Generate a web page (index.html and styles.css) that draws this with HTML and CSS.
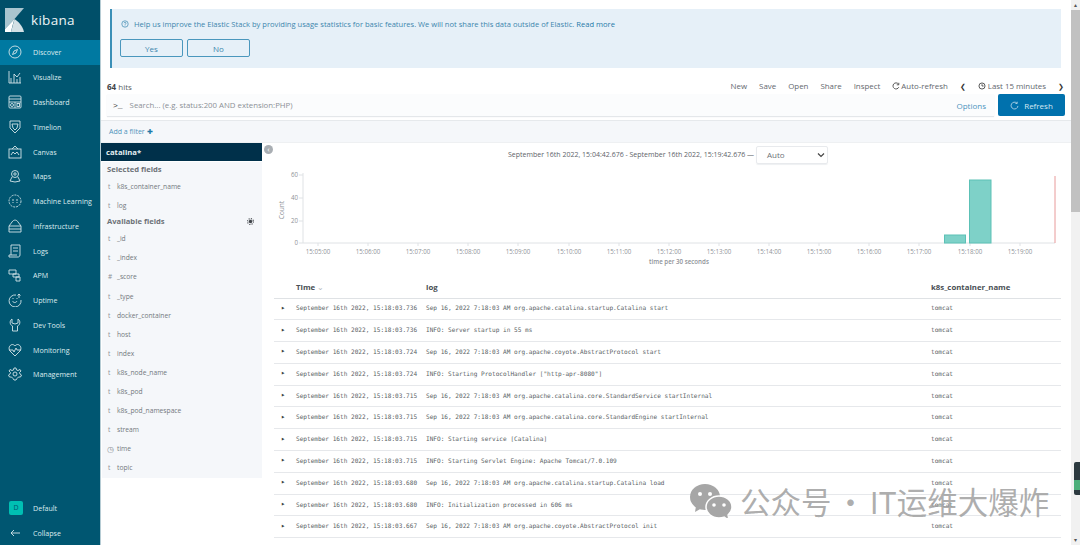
FILE: index.html
```html
<!DOCTYPE html>
<html lang="en">
<head>
<meta charset="utf-8">
<title>Kibana Discover</title>
<link rel="stylesheet" href="styles.css">
</head>
<body>
<div class="app">
<nav class="side">
  <div class="brand">
    <svg class="logo" viewBox="0 0 19 24"><path fill="#a9c5cf" d="M0 0H19L9.500 11 0 21Z"/><path fill="#d3e0e5" d="M9.500 11C14 14 17.500 18 19 24H6Z"/><path fill="#fff" d="M0 24V21L9.500 11C8 15 7 20 6 24Z"/></svg>
    <span class="brand-name">kibana</span>
  </div>
  <ul class="nav">
    <li class="nav-item active"><svg class="ic" viewBox="0 0 14 14"><circle cx="7" cy="7" r="6"/><path d="M9.500 4.500 8 8 4.500 9.500 6 6Z"/></svg>Discover</li>
    <li class="nav-item"><svg class="ic" viewBox="0 0 14 14"><path d="M1 1V13H13M3 13V8M6 13V4L9 7 12 3M9 13V9M12 13V7"/></svg>Visualize</li>
    <li class="nav-item"><svg class="ic" viewBox="0 0 14 14"><rect x="1" y="1" width="12" height="12" rx="1"/><path d="M1 4H13M1 7H13M7 7V13"/><circle cx="4" cy="10" r="1.500"/><rect x="9" y="8.500" width="2.500" height="3"/></svg>Dashboard</li>
    <li class="nav-item"><svg class="ic" viewBox="0 0 14 14"><path d="M2 1H12V8L7 13 2 8ZM4 4H10L9 8 7 10 5 8Z"/></svg>Timelion</li>
    <li class="nav-item"><svg class="ic" viewBox="0 0 14 14"><rect x="1" y="4" width="12" height="9"/><path d="M4 4 7 1 10 4M3 10 5 7 7 9 9 7 11 10"/></svg>Canvas</li>
    <li class="nav-item"><svg class="ic" viewBox="0 0 14 14"><circle cx="7" cy="5" r="3.500"/><circle cx="7" cy="5" r="1.200"/><path d="M4 8 2 12 7 13 12 12 10 8"/></svg>Maps</li>
    <li class="nav-item"><svg class="ic dash" viewBox="0 0 14 14"><circle cx="7" cy="7" r="6"/><path d="M5 5V9M9 5V9"/></svg>Machine Learning</li>
    <li class="nav-item"><svg class="ic" viewBox="0 0 14 14"><path d="M1 7 4 3C6 0 9 1 10 3L13 7M1 7H13V13H1ZM1 10H13"/></svg>Infrastructure</li>
    <li class="nav-item"><svg class="ic" viewBox="0 0 14 14"><path d="M3 1H12V11C12 13 10 13 10 13H1V11H9M3 1V11M5 4H10M5 7H10"/></svg>Logs</li>
    <li class="nav-item"><svg class="ic" viewBox="0 0 14 14"><path d="M1 2H8V6H1ZM5 6H11V9H5ZM8 9H12V13H8Z"/></svg>APM</li>
    <li class="nav-item"><svg class="ic" viewBox="0 0 14 14"><path d="M8 2A6 6 0 1 0 13 7M4.500 8C5.500 10 8 10 9 8M5 5V6M9 5V6M11 5V1M9.500 2.500 11 1 12.500 2.500"/></svg>Uptime</li>
    <li class="nav-item"><svg class="ic" viewBox="0 0 14 14"><path d="M4 1V5L7 6 10 5V1C13 3 12 7 9.500 8V13H4.500V8C2 7 1 3 4 1Z"/></svg>Dev Tools</li>
    <li class="nav-item"><svg class="ic" viewBox="0 0 14 14"><path d="M7 13 2 8C-1 4 4-1 7 3 10-1 15 4 12 8ZM1 7H5L6 9 8 5 9 7H13"/></svg>Monitoring</li>
    <li class="nav-item"><svg class="ic" viewBox="0 0 14 14"><circle cx="7" cy="7" r="2"/><path d="M6 1H8L8.500 3 10 3.500 12 2.500 13 4 11.500 5.500 12 7 13.500 8 12.500 10 10.500 10 9 11.500 8 13H6L5 11.500 3.500 10 1.500 10 .5 8 2 7 2.500 5.500 1 4 2 2.500 4 3.500 5.500 3Z"/></svg>Management</li>
  </ul>
  <ul class="nav nav-bottom">
    <li class="nav-item"><span class="space">D</span>Default</li>
    <li class="nav-item"><svg class="ic" viewBox="0 0 14 14"><path d="M12 7H3M6 4 3 7 6 10"/></svg>Collapse</li>
  </ul>
</nav>
<main class="main">
  <section class="banner">
    <p class="banner-text"><svg class="help" viewBox="0 0 10 10"><circle cx="5" cy="5" r="4"/><path d="M3.800 4C3.800 2.500 6.300 2.500 6.300 4 6.300 5 5 5 5 6M5 7V7.800"/></svg>Help us improve the Elastic Stack by providing usage statistics for basic features. We will not share this data outside of Elastic. <span class="read">Read more</span></p>
    <div class="banner-btns"><button class="ghost">Yes</button><button class="ghost">No</button></div>
  </section>
  <div class="topbar">
    <span class="hits"><b>64</b> hits</span>
    <div class="menu">
      <span>New</span><span>Save</span><span>Open</span><span>Share</span><span>Inspect</span>
      <span class="auto"><svg class="mini" viewBox="0 0 10 10"><path d="M8 2.500A3.800 3.800 0 1 0 8.500 6.500M8.500 1V3.500H6"/></svg>Auto-refresh</span>
      <span class="chev">❮</span>
      <span class="last"><svg class="mini" viewBox="0 0 10 10"><circle cx="5" cy="5" r="3.800"/><path d="M5 2.800V5H7"/></svg>Last 15 minutes</span>
      <span class="chev">❯</span>
    </div>
  </div>
  <div class="search-row">
    <div class="search">
      <span class="prompt">&gt;_</span>
      <span class="placeholder">Search... (e.g. status:200 AND extension:PHP)</span>
      <span class="options">Options</span>
    </div>
    <button class="refresh"><svg class="mini" viewBox="0 0 10 10"><path d="M7.500 2.200A3.800 3.800 0 1 0 8.800 5.500M8 .8V2.800H6"/></svg>Refresh</button>
  </div>
  <div class="filter-bar"><span class="add">Add a filter</span><span class="plus">✚</span></div>
  <div class="content">
    <aside class="fields">
      <div class="index">catalina*</div>
      <div class="field-list">
        <h3 class="group first">Selected fields</h3>
        <div class="field"><i>t</i>k8s_container_name</div>
        <div class="field"><i>t</i>log</div>
        <h3 class="group avail">Available fields<svg class="gear" viewBox="0 0 10 10"><circle class="gear-teeth" cx="5" cy="5" r="4.200"/><circle cx="5" cy="5" r="2.500"/></svg></h3>
        <div class="field"><i>t</i>_id</div>
        <div class="field"><i>t</i>_index</div>
        <div class="field"><i>#</i>_score</div>
        <div class="field"><i>t</i>_type</div>
        <div class="field"><i>t</i>docker_container</div>
        <div class="field"><i>t</i>host</div>
        <div class="field"><i>t</i>index</div>
        <div class="field"><i>t</i>k8s_node_name</div>
        <div class="field"><i>t</i>k8s_pod</div>
        <div class="field"><i>t</i>k8s_pod_namespace</div>
        <div class="field"><i>t</i>stream</div>
        <div class="field"><i class="clock">◷</i>time</div>
        <div class="field"><i>t</i>topic</div>
      </div>
    </aside>
    <section class="results">
      <span class="collapse-btn">‹</span>
      <div class="range">
        <span>September 16th 2022, 15:04:42.676 - September 16th 2022, 15:19:42.676 —</span>
        <span class="select">Auto<svg class="caret" viewBox="0 0 8 6"><path d="M1 1.500 4 4.500 7 1.500"/></svg></span>
      </div>
      <svg class="chart" viewBox="0 0 797 108" width="797" height="108">
        <g class="axis-lines">
          <path d="M29 6V76H781M29 8H25M29 31H25M29 54H25M29 76H25"/>
          <path d="M44 76V79M94 76V79M144 76V79M194 76V79M244 76V79M295 76V79M345 76V79M395 76V79M445 76V79M495 76V79M545 76V79M595 76V79M645 76V79M696 76V79M746 76V79"/>
        </g>
        <g class="ylab">
          <text x="24" y="10">60</text><text x="24" y="33">40</text><text x="24" y="56">20</text><text x="24" y="78">0</text>
        </g>
        <text class="count" transform="translate(10 43) rotate(-90)">Count</text>
        <g class="xlab">
          <text x="44" y="86.500">15:05:00</text><text x="94" y="86.500">15:06:00</text><text x="144" y="86.500">15:07:00</text><text x="194" y="86.500">15:08:00</text><text x="244" y="86.500">15:09:00</text><text x="295" y="86.500">15:10:00</text><text x="345" y="86.500">15:11:00</text><text x="395" y="86.500">15:12:00</text><text x="445" y="86.500">15:13:00</text><text x="495" y="86.500">15:14:00</text><text x="545" y="86.500">15:15:00</text><text x="595" y="86.500">15:16:00</text><text x="645" y="86.500">15:17:00</text><text x="696" y="86.500">15:18:00</text><text x="746" y="86.500">15:19:00</text>
        </g>
        <text class="xtitle" x="405" y="97">time per 30 seconds</text>
        <rect class="bar" x="670.500" y="68" width="21" height="8"/>
        <rect class="bar" x="695.500" y="13" width="21.500" height="63"/>
        <path class="now" d="M781 9V76"/>
      </svg>
      <table class="docs">
        <thead>
          <tr><th class="arrow-col"></th><th class="time-col">Time <span class="sort">⌄</span></th><th class="log-col">log</th><th>k8s_container_name</th></tr>
        </thead>
        <tbody>
          <tr><td class="tri">▸</td><td>September 16th 2022, 15:18:03.736</td><td>Sep 16, 2022 7:18:03 AM org.apache.catalina.startup.Catalina start</td><td>tomcat</td></tr>
          <tr><td class="tri">▸</td><td>September 16th 2022, 15:18:03.736</td><td>INFO: Server startup in 55 ms</td><td>tomcat</td></tr>
          <tr><td class="tri">▸</td><td>September 16th 2022, 15:18:03.724</td><td>Sep 16, 2022 7:18:03 AM org.apache.coyote.AbstractProtocol start</td><td>tomcat</td></tr>
          <tr><td class="tri">▸</td><td>September 16th 2022, 15:18:03.724</td><td>INFO: Starting ProtocolHandler ["http-apr-8080"]</td><td>tomcat</td></tr>
          <tr><td class="tri">▸</td><td>September 16th 2022, 15:18:03.715</td><td>Sep 16, 2022 7:18:03 AM org.apache.catalina.core.StandardService startInternal</td><td>tomcat</td></tr>
          <tr><td class="tri">▸</td><td>September 16th 2022, 15:18:03.715</td><td>Sep 16, 2022 7:18:03 AM org.apache.catalina.core.StandardEngine startInternal</td><td>tomcat</td></tr>
          <tr><td class="tri">▸</td><td>September 16th 2022, 15:18:03.715</td><td>INFO: Starting service [Catalina]</td><td>tomcat</td></tr>
          <tr><td class="tri">▸</td><td>September 16th 2022, 15:18:03.715</td><td>INFO: Starting Servlet Engine: Apache Tomcat/7.0.109</td><td>tomcat</td></tr>
          <tr><td class="tri">▸</td><td>September 16th 2022, 15:18:03.680</td><td>Sep 16, 2022 7:18:03 AM org.apache.catalina.startup.Catalina load</td><td>tomcat</td></tr>
          <tr><td class="tri">▸</td><td>September 16th 2022, 15:18:03.680</td><td>INFO: Initialization processed in 606 ms</td><td>tomcat</td></tr>
          <tr><td class="tri">▸</td><td>September 16th 2022, 15:18:03.667</td><td>Sep 16, 2022 7:18:03 AM org.apache.coyote.AbstractProtocol init</td><td>tomcat</td></tr>
        </tbody>
      </table>
    </section>
  </div>
</main>
<div class="scrollbar">
  <span class="sb-arrow">▴</span>
  <div class="thumb"></div>
  <div class="sb-spacer"></div>
  <span class="sb-arrow">▾</span>
</div>
</div>
<div class="sb-widget"></div>
<div class="watermark">
  <svg class="wechat" viewBox="0 0 42 34"><ellipse cx="15" cy="13" rx="15" ry="13" fill="#a6a6a6"/><path d="M6 22 5 28 12 24Z" fill="#a6a6a6"/><ellipse cx="29" cy="23" rx="13" ry="11" fill="#a6a6a6" stroke="#fff" stroke-width="1.500"/><path d="M34 32 38 35 37 29Z" fill="#a6a6a6"/><circle cx="10" cy="10" r="2" fill="#fff"/><circle cx="20" cy="10" r="2" fill="#fff"/><circle cx="24" cy="21" r="1.800" fill="#fff"/><circle cx="34" cy="21" r="1.800" fill="#fff"/></svg>
  <span>公众号 · IT运维大爆炸</span>
</div>
</body>
</html>
```

FILE: styles.css
```css
* { box-sizing: border-box; }
html, body { margin: 0; height: 100%; overflow: hidden; background: #fff; }
body { font-family: "Open Sans", "Liberation Sans", sans-serif; color: #5a5f66; font-size: 8px; }
ul { list-style: none; margin: 0; padding: 0; }
p, h3 { margin: 0; }
.app { display: flex; height: 545px; }

.side { width: 101px; flex: none; background: #005671; color: #fff; display: flex; flex-direction: column; border-right: 1px solid #b6ccd4; }
.brand { height: 40px; background: #004f69; display: flex; align-items: center; padding-left: 5px; gap: 7px; flex: none; }
.logo { width: 19px; height: 24px; }
.brand-name { font-size: 13.500px; letter-spacing: .3px; color: #eef5f7; }
.nav-item { height: 24.750px; display: flex; align-items: center; padding-left: 8px; gap: 11px; font-size: 7.100px; color: #dcebef; }
.nav-item.active { background: #0079a1; height: 25px; padding-bottom: 1px; }
.ic { width: 14px; height: 14px; flex: none; fill: none; stroke: #d4e4e9; stroke-width: .9; }
.ic.dash { stroke-dasharray: 2 1; }
.nav-bottom { margin-top: auto; }
.space { width: 14px; height: 14px; flex: none; background: #00bfb3; color: #005671; border-radius: 2px; display: flex; align-items: center; justify-content: center; font-size: 7px; margin-left: 1px; margin-right: -1px; }

.main { flex: 1; min-width: 0; display: flex; flex-direction: column; }
.banner { margin: 9px 10px 0 9px; height: 59px; background: #e6f0f8; border-left: 2px solid #3a8fb7; padding: 10px 9px 0 9px; flex: none; }
.banner-text { color: #3d86ad; font-size: 7.570px; line-height: 10px; display: flex; align-items: center; white-space: pre-wrap; }
.read { color: #1f7aa8; }
.help { width: 8px; height: 8px; margin-right: 5px; fill: none; stroke: #2a80aa; stroke-width: .8; }
.banner-btns { display: flex; gap: 4px; margin-top: 10px; margin-left: -1px; }
.ghost { width: 63px; height: 18px; border: 1px solid #4a97bd; border-radius: 2px; background: #e6f0f8; color: #3d86ad; font: 8px "Open Sans", sans-serif; padding: 0; }

.topbar { display: flex; justify-content: space-between; align-items: center; height: 26px; padding: 10px 7px 0 6px; flex: none; }
.hits { font-size: 8px; color: #5a5f66; }
.hits b { color: #3f4348; }
.menu { display: flex; align-items: center; gap: 12px; font-size: 7.900px; color: #63686e; }
.mini { width: 8px; height: 8px; fill: none; stroke: #444; stroke-width: 1.100; }
.auto, .last { display: inline-flex; align-items: center; gap: 1px; }
.last { gap: 2px; }
.chev { font-size: 7px; color: #333; }

.search-row { display: flex; height: 26px; padding: 0 6px 4px 6px; flex: none; gap: 4px; }
.search { flex: 1; height: 22px; background: #fbfcfd; box-shadow: 0 1px 1px #e4e7ea; display: flex; align-items: center; padding: 0 8px 0 6px; color: #8b9096; font-size: 7.800px; }
.prompt { color: #444; margin-right: 7px; font-size: 8px; font-family: "Liberation Mono", monospace; }
.options { margin-left: auto; color: #4d95bd; font-size: 8px; }
.refresh { width: 67px; height: 22px; background: #0071ad; border: 0; border-radius: 2px; color: #d5e8f3; font: 8px "Open Sans", sans-serif; display: flex; align-items: center; justify-content: center; gap: 5px; padding: 0; }
.refresh .mini { stroke: #d5e8f3; width: 9px; height: 9px; stroke-width: .8; }

.filter-bar { height: 22px; background: #f5f7fa; border-top: 1px solid #e6e9ec; display: flex; align-items: center; padding: 0 0 1px 8px; gap: 2px; color: #4f93bb; font-size: 7px; flex: none; }
.plus { font-size: 6.500px; color: #1f7aa8; }

.content { flex: 1; display: flex; min-height: 0; border-top: 1px solid #eef0f2; }
.fields { width: 161px; flex: none; }
.index { height: 18px; background: #00304a; color: #e4edf1; font-weight: 700; font-size: 7.700px; display: flex; align-items: center; padding: 0 0 1px 5px; }
.field-list { background: #f5f7fa; margin-left: 1px; height: 316px; padding-left: 5px; }
.group { font-size: 7.600px; font-weight: 700; color: #6d7278; height: 15px; line-height: 15px; display: flex; justify-content: space-between; align-items: center; padding-right: 8px; }
.group.first { margin-top: 1px; }
.group.avail { margin-top: -1px; }
.field { height: 19.100px; display: flex; align-items: center; font-size: 6.700px; color: #72777d; }
.field i { font-style: normal; width: 10px; flex: none; font-size: 6.500px; color: #8a8f95; padding-left: 1px; }
.field .clock { font-size: 8px; padding-left: 0; }
.gear { width: 7px; height: 7px; fill: #3f4348; stroke: none; }
.gear-teeth { fill: none; stroke: #3f4348; stroke-width: 1.600; stroke-dasharray: 1.600 1.700; }

.results { flex: 1; position: relative; padding-left: 12px; min-width: 0; }
.collapse-btn { position: absolute; left: 2px; top: 2px; width: 9px; height: 9px; border-radius: 50%; background: #a9aeb3; color: #fff; font-size: 8px; line-height: 7px; text-align: center; }
.range { height: 21px; display: flex; align-items: center; padding-left: 234px; gap: 2px; font-size: 7px; color: #5e6369; white-space: nowrap; margin: 1px 0 2px; }
.select { width: 72px; height: 18px; border: 1px solid #e8eaed; border-radius: 2px; display: flex; align-items: center; justify-content: space-between; padding: 0 2px 0 10px; font-size: 8px; color: #6d7278; box-shadow: 0 1px 1px #eef0f2; }
.caret { width: 8px; height: 6px; fill: none; stroke: #444; stroke-width: 1.200; }
.chart { display: block; overflow: visible; }
.axis-lines path { fill: none; stroke: #dfe2e5; stroke-width: 1; }
.ylab text { font-size: 6.200px; fill: #8f9398; text-anchor: end; }
.xlab text { font-size: 6.200px; fill: #8f9398; text-anchor: middle; }
.count { font-size: 6.500px; fill: #8f9398; text-anchor: middle; }
.xtitle { font-size: 6.200px; fill: #8f9398; text-anchor: middle; font-weight: 600; }
.bar { fill: #7ed1c8; stroke: #5cc1b6; stroke-width: 1; }
.now { stroke: #e89a9a; stroke-width: 1; fill: none; }

.docs { border-collapse: collapse; width: 787px; table-layout: fixed; margin-top: 1px; }
.docs th { text-align: left; font-size: 7.800px; font-weight: 700; color: #4a4f55; height: 22px; border-bottom: 1px solid #dfe2e5; padding: 1px 0 0; }
.docs td { font: 6.100px "DejaVu Sans Mono", monospace; color: #5a5f66; height: 21.800px; border-bottom: 1px solid #e6e8eb; padding: 0 0 2px; white-space: nowrap; }
.arrow-col { width: 22px; }
.time-col { width: 130px; }
.log-col { width: 505px; }
.docs .tri { font-size: 7px; color: #3f4348; padding-left: 7px; }
.sort { color: #b5b9bd; font-weight: 400; }

.scrollbar { width: 9px; flex: none; background: #f1f1f1; display: flex; flex-direction: column; align-items: center; }
.sb-arrow { height: 10px; font-size: 6px; line-height: 10px; color: #555; }
.thumb { width: 100%; height: 202px; background: #c1c1c1; flex: none; }
.sb-spacer { flex: 1; }
.sb-widget { position: absolute; left: 1074px; top: 462px; width: 6px; height: 33px; border-radius: 2px 0 0 2px; background: linear-gradient(#2d3a40 0 55%, #4caf7a 55% 85%, #2d3a40 85%); }
.watermark { position: absolute; left: 690px; top: 483px; display: flex; align-items: center; gap: 8px; color: rgba(160, 160, 160, .85); font-family: "Noto Sans CJK SC", sans-serif; font-size: 30.500px; word-spacing: -3px; line-height: 36px; white-space: nowrap; }
.wechat { width: 42px; height: 34px; flex: none; }
```
